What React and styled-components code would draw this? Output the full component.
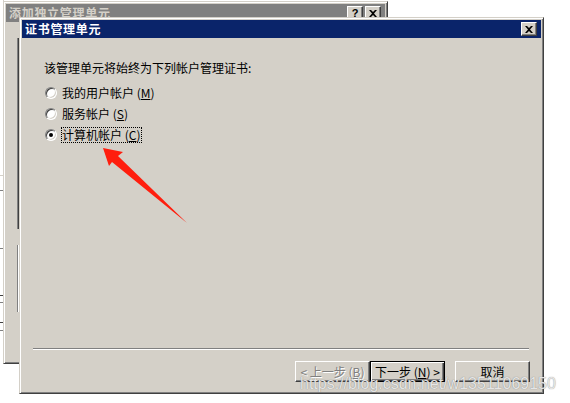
import React from "react";
import styled, { createGlobalStyle, css } from "styled-components";

const GlobalStyle = createGlobalStyle`
  html, body {
    margin: 0;
    padding: 0;
    background: #fff;
  }
`;

const raised = css`
  border: 1px solid;
  border-color: #d4d0c8 #404040 #404040 #d4d0c8;
  box-shadow: inset 1px 1px #fff, inset -1px -1px #808080;
`;

const Desktop = styled.div`
  position: relative;
  width: 570px;
  height: 403px;
  overflow: hidden;
  background: #fff;
  font-family: "Noto Sans CJK SC", "Liberation Sans", sans-serif;
  font-size: 12px;
  color: #000;
`;

const ConsoleStrip = styled.div`
  position: absolute;
  left: 0;
  top: 0;
  width: 3px;
  height: 364px;
  background: #fff;
  border-right: 1px solid #d4d0c8;
  display: flex;
  flex-direction: column;
`;

const Tick = styled.div`
  height: 1px;
  margin-top: ${(p) => p.$gap}px;
  background: ${(p) => p.$color};
`;

const Window = styled.div`
  position: absolute;
  left: ${(p) => p.$left}px;
  top: ${(p) => p.$top}px;
  width: ${(p) => p.$width}px;
  height: ${(p) => p.$height}px;
  box-sizing: border-box;
  background: #d4d0c8;
  padding: 2px;
  display: flex;
  flex-direction: column;
  ${raised}
`;

const TitleBar = styled.div`
  height: 18px;
  flex: none;
  display: flex;
  align-items: center;
  gap: 2px;
  padding: 0 4px 0 3px;
  background: ${(p) => (p.$active ? "#0a246a" : "#808080")};
  color: ${(p) => (p.$active ? "#fff" : "#d4d0c8")};
  font-weight: bold;
  letter-spacing: 0.7px;
  line-height: 18px;
`;

const Title = styled.div`
  flex: 1;
  white-space: nowrap;
`;

const CaptionButton = styled.div`
  width: 16px;
  height: 14px;
  box-sizing: border-box;
  background: #d4d0c8;
  border: 1px solid;
  border-color: #fff #404040 #404040 #fff;
  box-shadow: inset -1px -1px #808080;
  display: flex;
  align-items: center;
  justify-content: center;
  color: #000;
  font-family: "Liberation Sans", sans-serif;
  font-size: 11px;
  font-weight: bold;
  letter-spacing: 0;
`;

const BackPane = styled.div`
  flex: 1;
  display: flex;
  flex-direction: column;
  padding: 16px 0 0 11px;
`;

const Frame = styled.div`
  height: ${(p) => p.$height}px;
  margin-top: ${(p) => p.$gap}px;
  border-left: 1px solid #808080;
  box-shadow: inset 1px 0 ${(p) => (p.$groove ? "#fff" : "#404040")};
`;

const DialogBody = styled.div`
  flex: 1;
  display: flex;
  flex-direction: column;
  padding: 22px 0 0 22px;
`;

const Intro = styled.div`
  line-height: 16px;
  margin-bottom: 6px;
`;

const RadioRow = styled.div`
  height: 21px;
  display: flex;
  align-items: center;
  gap: 4px;
  padding-left: 1px;
`;

const RadioCircle = styled.span`
  width: 12px;
  height: 12px;
  box-sizing: border-box;
  border-radius: 50%;
  border: 1px solid;
  border-color: #808080 #fff #fff #808080;
  background: #fff;
  box-shadow: inset 1px 1px #404040, inset -1px -1px #d4d0c8;
  display: flex;
  align-items: center;
  justify-content: center;
  &::after {
    content: "";
    width: 4px;
    height: 4px;
    border-radius: 50%;
    background: ${(p) => (p.$checked ? "#000" : "transparent")};
  }
`;

const RadioLabel = styled.span`
  line-height: 14px;
  border: 1px dotted ${(p) => (p.$focused ? "#000" : "transparent")};
  padding-right: 1px;
  white-space: nowrap;
`;

const Separator = styled.div`
  height: 0;
  border-top: 1px solid #808080;
  border-bottom: 1px solid #fff;
  margin: 0 12px 11px 11px;
`;

const ButtonRow = styled.div`
  display: flex;
  justify-content: flex-end;
  padding: 0 11px 9px 0;
`;

const PushButton = styled.div`
  width: 75px;
  height: 21px;
  box-sizing: border-box;
  margin-left: ${(p) => p.$gap || 0}px;
  display: flex;
  align-items: center;
  justify-content: center;
  white-space: nowrap;
  background: #d4d0c8;
  border: 1px solid;
  ${(p) =>
    p.$default
      ? css`
          border-color: #000;
          box-shadow: inset 1px 1px #fff, inset -1px -1px #404040,
            inset -2px -2px #808080;
        `
      : css`
          border-color: #fff #404040 #404040 #fff;
          box-shadow: inset -1px -1px #808080;
        `}
  color: ${(p) => (p.$disabled ? "#808080" : "#000")};
  text-shadow: ${(p) => (p.$disabled ? "1px 1px 0 #fff" : "none")};
`;

const Watermark = styled.div`
  position: absolute;
  left: 300px;
  top: 375px;
  font-family: "Liberation Sans", Arial, sans-serif;
  font-size: 16px;
  line-height: 18px;
  color: rgba(236, 236, 236, 0.95);
  text-shadow: 0 0 1px rgba(90, 90, 90, 0.75);
  white-space: nowrap;
`;

const Overlay = styled.svg`
  position: absolute;
  left: 0;
  top: 0;
  pointer-events: none;
`;

const options = [
  { label: "我的用户帐户", key: "M" },
  { label: "服务帐户", key: "S" },
  { label: "计算机帐户", key: "C", checked: true },
];

function CloseGlyph() {
  return (
    <svg width="8" height="7" viewBox="0 0 8 7">
      <path d="M0 0h2l2 2 2-2h2L5 3.5 8 7H6L4 5 2 7H0l3-3.5z" fill="#000" />
    </svg>
  );
}

export default function App() {
  return (
    <Desktop>
      <GlobalStyle />
      <ConsoleStrip>
        <Tick $gap={175} $color="#d4d0c8" />
        <Tick $gap={14} $color="#808080" />
        <Tick $gap={57} $color="#808080" />
        <Tick $gap={46} $color="#404040" />
        <Tick $gap={6} $color="#808080" />
        <Tick $gap={19} $color="#404040" />
        <Tick $gap={7} $color="#808080" />
      </ConsoleStrip>

      <Window $left={3} $top={1} $width={385} $height={363}>
        <TitleBar>
          <Title>添加独立管理单元</Title>
          <CaptionButton>?</CaptionButton>
          <CaptionButton>
            <CloseGlyph />
          </CaptionButton>
        </TitleBar>
        <BackPane>
          <Frame $height={191} $gap={0} />
          <Frame $height={67} $gap={16} $groove />
        </BackPane>
      </Window>

      <Window $left={19} $top={17} $width={525} $height={377}>
        <TitleBar $active>
          <Title>证书管理单元</Title>
          <CaptionButton>
            <CloseGlyph />
          </CaptionButton>
        </TitleBar>
        <DialogBody>
          <Intro>该管理单元将始终为下列帐户管理证书:</Intro>
          {options.map((o) => (
            <RadioRow key={o.key}>
              <RadioCircle $checked={o.checked} />
              <RadioLabel $focused={o.checked}>
                {o.label} (<u>{o.key}</u>)
              </RadioLabel>
            </RadioRow>
          ))}
        </DialogBody>
        <Separator />
        <ButtonRow>
          <PushButton $disabled>&lt; 上一步 (<u>B</u>)</PushButton>
          <PushButton $default>
            下一步 (<u>N</u>) &gt;
          </PushButton>
          <PushButton $gap={10}>取消</PushButton>
        </ButtonRow>
      </Window>

      <Overlay width="570" height="403" viewBox="0 0 570 403">
        <polygon
          points="103,148 123,152 118,156 187,223 112,162 109,166"
          fill="#ff1e0e"
        />
      </Overlay>

      <Watermark>https://blog.csdn.net/w13511069150</Watermark>
    </Desktop>
  );
}
